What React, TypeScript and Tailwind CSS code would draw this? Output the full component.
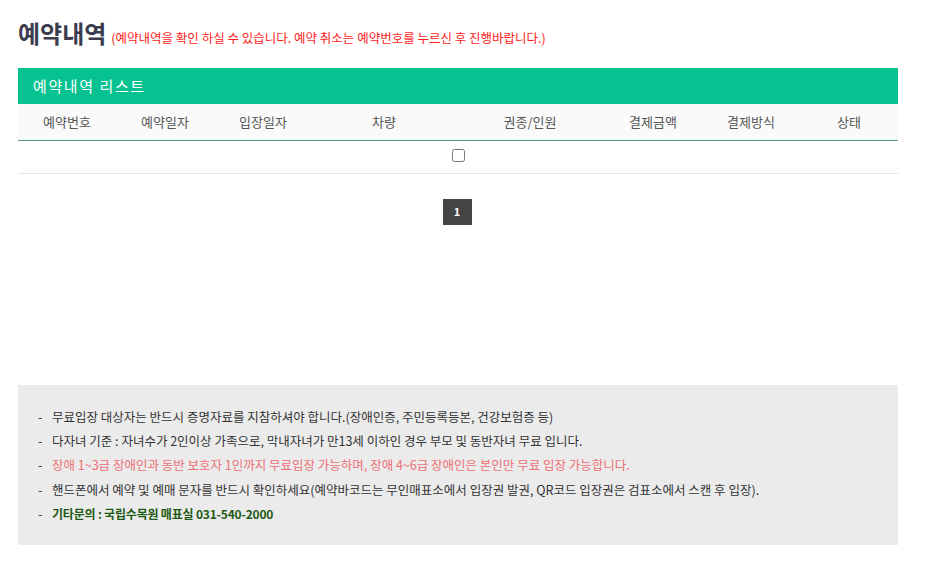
import React from 'react';

const columns = [
    { label: '예약번호', w: 'w-[98px]' },
    { label: '예약일자', w: 'w-[98px]' },
    { label: '입장일자', w: 'w-[98px]' },
    { label: '차량', w: 'w-[144px]' },
    { label: '권종/인원', w: 'w-[148px]' },
    { label: '결제금액', w: 'w-[98px]' },
    { label: '결제방식', w: 'w-[98px]' },
    { label: '상태', w: 'w-[98px]' },
];

const notices = [
    { text: '무료입장 대상자는 반드시 증명자료를 지참하셔야 합니다.(장애인증, 주민등록등본, 건강보험증 등)', cls: 'text-[#333] text-[12.5px]' },
    { text: '다자녀 기준 : 자녀수가 2인이상 가족으로, 막내자녀가 만13세 이하인 경우 부모 및 동반자녀 무료 입니다.', cls: 'text-[#333] text-[12.5px]' },
    { text: '장애 1~3급 장애인과 동반 보호자 1인까지 무료입장 가능하며, 장애 4~6급 장애인은 본인만 무료 입장 가능합니다.', cls: 'text-[#ee6f76] text-[12.5px]' },
    { text: '핸드폰에서 예약 및 예매 문자를 반드시 확인하세요(예약바코드는 무인매표소에서 입장권 발권, QR코드 입장권은 검표소에서 스캔 후 입장).', cls: 'text-[#333] text-[12.5px]' },
    { text: '기타문의 : 국립수목원 매표실 031-540-2000', cls: 'text-[#1f5a14] font-bold text-[12px] tracking-[-0.2px]' },
];

const App: React.FC = () => {
    return (
        <div className="bg-white min-h-[570px] px-[18px] pt-[18px] font-['Noto_Sans_CJK_KR','Noto_Sans',sans-serif] w-[929px]">
            <h2 className="flex items-baseline gap-[5px]">
                <span className="text-[24px] font-bold text-[#3b3b4d] leading-[30px]">예약내역</span>
                <span className="text-[12.5px] text-[#ff1a1a]">(예약내역을 확인 하실 수 있습니다. 예약 취소는 예약번호를 누르신 후 진행바랍니다.)</span>
            </h2>

            <div className="mt-[20px] w-[880px]">
                <div className="h-[36px] bg-[#06c290] flex items-center px-[15px]">
                    <span className="text-white text-[15px] tracking-[1.6px]">예약내역 리스트</span>
                </div>
                <table className="w-[880px] border-collapse table-fixed">
                    <thead>
                        <tr className="bg-[#fafafa] border-b border-[#4e9a80] h-[36px]">
                            {columns.map(c => (
                                <th key={c.label} className={`${c.w} font-normal text-[13px] text-[#555] text-center`}>
                                    {c.label}
                                </th>
                            ))}
                        </tr>
                    </thead>
                    <tbody>
                        <tr className="border-b border-[#e6e6e6] h-[33px]">
                            <td colSpan={8} className="align-middle">
                                <input type="checkbox" className="block mx-auto w-[13px] h-[13px] -mt-[2px]" />
                            </td>
                        </tr>
                    </tbody>
                </table>

                <div className="flex justify-center mt-[25px]">
                    <span className="w-[29px] h-[26px] bg-[#444] text-white text-[11px] font-bold flex items-center justify-center -ml-[2px]">1</span>
                </div>
            </div>

            <div className="mt-[160px] w-[880px] bg-[#ebebeb] pt-[20px] pb-[18px] px-[20px]">
                <ul>
                    {notices.map(n => (
                        <li key={n.text} className={`flex leading-[24.4px] ${n.cls}`}>
                            <span className="w-[14px] text-[#333] font-normal text-[12.5px]">-</span>
                            {n.text}
                        </li>
                    ))}
                </ul>
            </div>
        </div>
    );
};

export default App;
